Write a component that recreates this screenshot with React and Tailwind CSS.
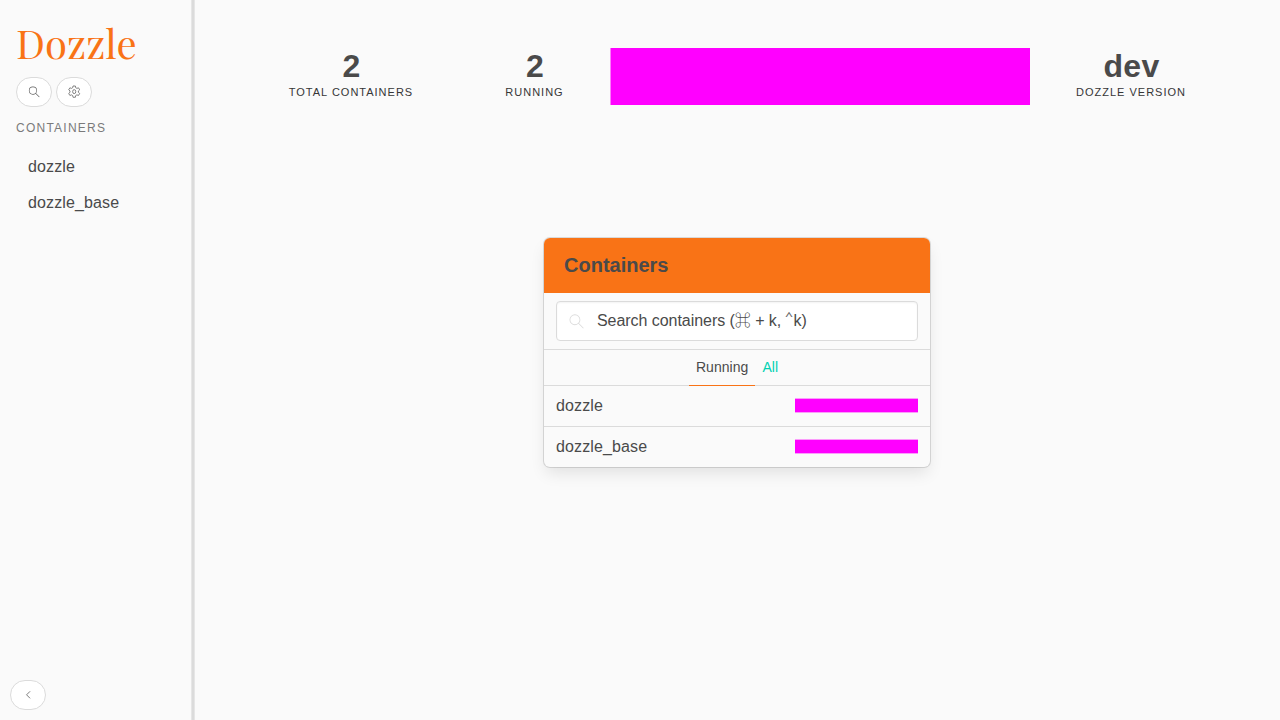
function SearchIcon({ className }) {
  return (
    <svg viewBox="0 0 24 24" fill="currentColor" className={className}>
      <path d="M9.5 4A6.5 6.5 0 0 1 16 10.5c0 1.62-.59 3.1-1.57 4.23l5.65 5.65-.71.71-5.65-5.65A6.469 6.469 0 0 1 9.5 17 6.5 6.5 0 0 1 3 10.5 6.5 6.5 0 0 1 9.5 4m0 1A5.5 5.5 0 0 0 4 10.5 5.5 5.5 0 0 0 9.5 16a5.5 5.5 0 0 0 5.5-5.5A5.5 5.5 0 0 0 9.5 5z" />
    </svg>
  );
}

function CogIcon({ className }) {
  return (
    <svg viewBox="0 0 24 24" fill="none" stroke="currentColor" strokeWidth="1.2" strokeLinejoin="round" className={className}>
      <path d="M9.6 3.2h3.8l.5 2.7 1.9 1.1 2.6-.9 1.9 3.2-2.1 1.8v2.2l2.1 1.8-1.9 3.2-2.6-.9-1.9 1.1-.5 2.7H9.6l-.5-2.7-1.9-1.1-2.6.9-1.9-3.2 2.1-1.8v-2.2L2.700 9.300l1.900-3.200 2.600.900 1.900-1.100z" />
      <ellipse cx="11.500" cy="12.200" rx="2.500" ry="3.200" />
    </svg>
  );
}

function ChevronLeftIcon({ className }) {
  return (
    <svg viewBox="0 0 24 24" fill="none" stroke="currentColor" strokeWidth="1.3" className={className}>
      <path d="M14.500 6.900l-5.600 5.600 5.600 5.600" />
    </svg>
  );
}

function RoundButton({ children }) {
  return (
    <button className="flex h-[30px] w-9 items-center justify-center rounded-full border border-[#dbdbdb] bg-white text-[#5c5c5c]">
      {children}
    </button>
  );
}

function Stat({ value, label, className }) {
  return (
    <div className={`flex flex-col items-center ${className}`}>
      <p className="pl-px text-[32px] leading-9 font-semibold tracking-[0.3px] text-[#4a4a4a]">{value}</p>
      <p className="text-[11px] leading-4 tracking-[1px] whitespace-nowrap text-[#363636] uppercase">{label}</p>
    </div>
  );
}

function ContainerRow({ name }) {
  return (
    <div className="flex h-[41px] items-center justify-between border-t border-[#dbdbdb] px-3">
      <span className="leading-6 tracking-[0.13px]">{name}</span>
      <span className="mb-0.5 h-[15px] w-[123px] border-y border-[#fb9cfb] bg-[#ff00ff]" />
    </div>
  );
}

export default function App() {
  return (
    <div className="flex h-screen w-full overflow-hidden bg-[#fafafa] font-['Liberation_Sans',Arial,sans-serif] text-base text-[#4a4a4a]">
      <aside className="flex w-[191px] shrink-0 flex-col justify-between">
        <div className="px-4 pt-[19px]">
          <h1 className="h-[58px] font-['Playfair_Display','Liberation_Serif',serif] text-[40px] leading-[48px] tracking-[0.1px] text-[#f97316]">
            Dozzle
          </h1>
          <div className="flex gap-1">
            <RoundButton>
              <SearchIcon className="mb-px size-[15px]" />
            </RoundButton>
            <RoundButton>
              <CogIcon className="mb-px size-[15px]" />
            </RoundButton>
          </div>
          <p className="mt-[13px] text-xs leading-4 tracking-[1.25px] text-[#7a7a7a] uppercase">Containers</p>
          <ul className="mt-[13px] tracking-[0.13px]">
            <li className="px-3 py-1.5 leading-6">dozzle</li>
            <li className="px-3 py-1.5 leading-6">dozzle_base</li>
          </ul>
        </div>
        <div className="px-2.5 pb-2.5">
          <RoundButton>
            <ChevronLeftIcon className="mb-px size-[15px]" />
          </RoundButton>
        </div>
      </aside>
      <div className="w-1 shrink-0 border-x border-[#e6e6e6] bg-[#dbdbdb]" />
      <main className="flex flex-1 flex-col items-center pt-12">
        <section className="flex w-full pl-12">
          <Stat value="2" label="Total Containers" className="w-[216px]" />
          <Stat value="2" label="Running" className="w-[151px]" />
          <div className="h-[57px] w-[420px] border-l border-[#fd7dfd] bg-[#ff00ff]" />
          <Stat value="dev" label="Dozzle Version" className="w-[202px]" />
        </section>
        <section className="mt-[133px] mr-px w-[386px] overflow-hidden rounded-md shadow-[0_8px_16px_-2px_rgba(10,10,10,0.1),0_0_0_1px_#dbdbdb]">
          <h2 className="h-[55px] bg-[#f97316] px-5 text-xl leading-[55px] font-semibold">Containers</h2>
          <div className="px-3 py-2">
            <div className="flex h-10 items-center rounded border border-[#dbdbdb] bg-white pl-2.5 shadow-[inset_0_1px_2px_rgba(10,10,10,0.05)]">
              <SearchIcon className="mb-px size-5 text-[#dbdbdb]" />
              <span className="ml-2.5 font-['Liberation_Sans','Noto_Sans_CJK_JP',sans-serif] leading-6 tracking-[-0.05px] whitespace-nowrap">
                Search containers (⌘ + k,{" "}
                <span className="-ml-px inline-block align-[3px] font-['DejaVu_Sans_Mono',monospace] text-[15px] leading-none text-[#6a6a6a]">
                  ⌃
                </span>
                k)
              </span>
            </div>
          </div>
          <div className="flex h-9 justify-center border-t border-[#dbdbdb] text-sm leading-[35px]">
            <span className="-mb-px h-9 border-b border-[#f97316] px-[7px] tracking-[0.05px]">Running</span>
            <span className="h-9 px-[7px] text-[#00d1b2]">All</span>
          </div>
          <ContainerRow name="dozzle" />
          <ContainerRow name="dozzle_base" />
        </section>
      </main>
    </div>
  );
}
